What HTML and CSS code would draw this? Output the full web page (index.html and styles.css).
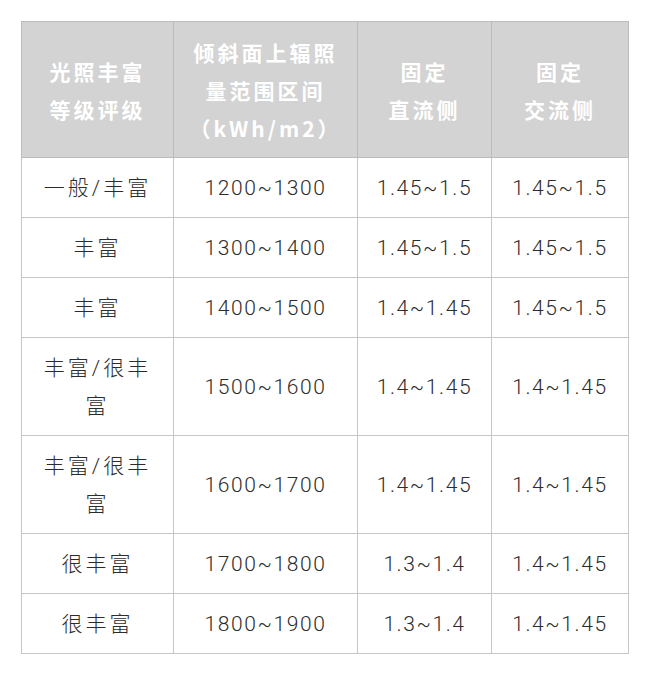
FILE: index.html
```html
<!DOCTYPE html>
<html lang="zh">
<head>
<meta charset="utf-8">
<link rel="stylesheet" href="styles.css">
</head>
<body>
<table class="grid">
  <colgroup>
    <col class="c1"><col class="c2"><col class="c3"><col class="c4">
  </colgroup>
  <thead>
    <tr>
      <th>光照丰富<br>等级评级</th>
      <th>倾斜面上辐照<br>量范围区间<br>（kWh/m2）</th>
      <th>固定<br>直流侧</th>
      <th>固定<br>交流侧</th>
    </tr>
  </thead>
  <tbody>
    <tr><td class="label">一般/丰富</td><td>1200~1300</td><td>1.45~1.5</td><td>1.45~1.5</td></tr>
    <tr><td class="label">丰富</td><td>1300~1400</td><td>1.45~1.5</td><td>1.45~1.5</td></tr>
    <tr><td class="label">丰富</td><td>1400~1500</td><td>1.4~1.45</td><td>1.45~1.5</td></tr>
    <tr><td class="label">丰富/很丰<br>富</td><td>1500~1600</td><td>1.4~1.45</td><td>1.4~1.45</td></tr>
    <tr><td class="label">丰富/很丰<br>富</td><td>1600~1700</td><td>1.4~1.45</td><td>1.4~1.45</td></tr>
    <tr><td class="label">很丰富</td><td>1700~1800</td><td>1.3~1.4</td><td>1.4~1.45</td></tr>
    <tr><td class="label">很丰富</td><td>1800~1900</td><td>1.3~1.4</td><td>1.4~1.45</td></tr>
  </tbody>
</table>
</body>
</html>
```
FILE: styles.css
```css
html, body {
  margin: 0;
  padding: 0;
  background: #ffffff;
}
body {
  padding: 21px 0 0 21px;
  font-family: Roboto, "Noto Sans CJK SC", sans-serif;
}
.grid {
  border-collapse: collapse;
  table-layout: fixed;
  width: 607px;
}
.c1 { width: 152px; }
.c2 { width: 184px; }
.c3 { width: 134px; }
.c4 { width: 137px; }
.grid th,
.grid td {
  border: 1px solid #c6c6c6;
  text-align: center;
  vertical-align: middle;
  padding: 11px 0 10px;
  line-height: 38px;
}
.grid th {
  background: #d3d3d3;
  color: #ffffff;
  font-family: "Noto Sans CJK SC", sans-serif;
  font-weight: 700;
  font-size: 21px;
  letter-spacing: 3px;
  border-color: #bcbcbc;
}
.grid td {
  color: #2c2c2c;
  font-size: 21px;
  font-weight: 300;
  letter-spacing: 1.6px;
}
.grid td.label {
  letter-spacing: 3px;
}
```
